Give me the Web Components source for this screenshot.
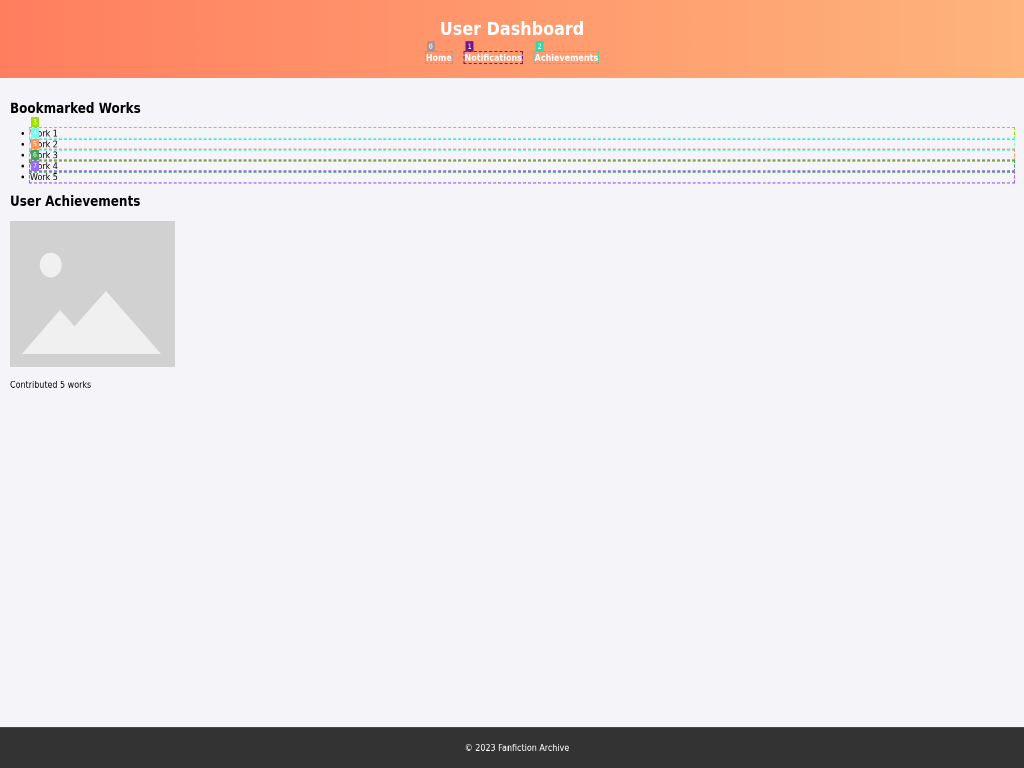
<!DOCTYPE html>
<html lang="en">
<head>
<meta charset="utf-8">
<title>User Dashboard</title>
<style>
html, body { margin: 0; height: 100%; overflow: hidden; background: #f4f4f9; }
</style>
</head>
<body>
<dashboard-page></dashboard-page>
<script>
const define = (name, html) => customElements.define(name, class extends HTMLElement {
  constructor() {
    super();
    this.attachShadow({ mode: 'open' }).innerHTML = html;
    const tag = this.getAttribute('tag');
    const badge = this.shadowRoot.querySelector('.badge');
    if (badge) {
      badge.textContent = tag;
      this.style.setProperty('--c', this.getAttribute('color'));
    }
  }
});

// Content with a dashed outline and a numbered label on its top left corner.
define('tagged-box', `<style>
  :host { display: block; position: relative; outline: 2px dashed var(--c); }
  .badge { position: absolute; left: 2px; top: -19px; box-sizing: border-box; width: 16px; height: 18px; text-align: center; background: var(--c); color: #fff;
    font: 13px/18px "DejaVu Sans Mono", monospace; border-radius: 1px; z-index: 2; }
</style><slot></slot><span class="badge"></span>`);

define('page-header', `<style>
  :host { display: block; padding: 10px; text-align: center; color: #fff; background: linear-gradient(to right, #ff7e5f, #feb47b); }
  h1 { margin: 21.44px 0 21.56px; font-size: 32px; line-height: 38px; }
  nav { display: flex; justify-content: center; gap: 25.5px; margin-bottom: 16px; font-weight: bold; }
</style><h1>User Dashboard</h1>
<nav><tagged-box tag="0" color="#b09299">Home</tagged-box><tagged-box tag="1" color="#751589">Notifications</tagged-box><tagged-box tag="2" color="#2bdcab">Achievements</tagged-box></nav>`);

define('work-list', `<style>
  :host { display: block; }
  h2 { margin: 19px 0 20px; font-size: 24px; line-height: 28px; }
  ul { margin: 0; padding: 0 0 0 40px; }
</style><h2>Bookmarked Works</h2>
<ul>
<li><tagged-box tag="3" color="#9ddf02">Work 1</tagged-box></li>
<li><tagged-box tag="4" color="#7df5e8">Work 2</tagged-box></li>
<li><tagged-box tag="5" color="#fb965b">Work 3</tagged-box></li>
<li><tagged-box tag="6" color="#43a556">Work 4</tagged-box></li>
<li><tagged-box tag="7" color="#9b69fb">Work 5</tagged-box></li>
</ul>`);

define('user-achievements', `<style>
  :host { display: block; }
  h2 { margin: 19px 0 20px; font-size: 24px; line-height: 28px; }
  svg { display: block; width: 330px; height: 255px; }
  p { margin: 21.5px 0 16px; }
</style><h2>User Achievements</h2>
<svg viewBox="0 0 330 255"><rect width="330" height="255" fill="#d1d1d1"/>
<ellipse cx="81.5" cy="77" rx="22" ry="21.6" fill="#f0f0f0"/>
<path d="M24 232 100 155.5 129 184 192 122.5 302 232Z" fill="#f0f0f0"/></svg>
<p>Contributed 5 works</p>`);

define('page-footer', `<style>
  :host { display: block; padding: 10px 10px 10px 30px; text-align: center; background: #333; color: #fff; }
  p { margin: 16px 0; }
</style><p>© 2023 Fanfiction Archive</p>`);

define('dashboard-page', `<style>
  :host { display: block; width: 1024px; height: 768px; overflow: hidden; }
  .page { display: flex; flex-direction: column; width: 2048px; height: 1339px; transform: scale(.5, .57356); transform-origin: 0 0;
    will-change: transform; font: 16px/19px "DejaVu Sans", sans-serif; color: #000; background: #f4f4f9; }
  main { flex: 1; padding: 20px; display: flex; flex-direction: column; }
</style><div class="page"><page-header></page-header>
<main><work-list></work-list><user-achievements></user-achievements></main>
<page-footer></page-footer></div>`);
</script>
</body>
</html>
